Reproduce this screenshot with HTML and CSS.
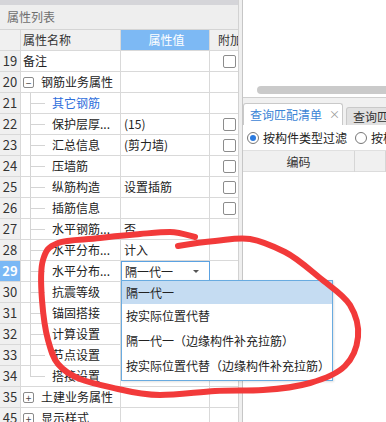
FILE: index.html
```html
<!DOCTYPE html>
<html>
<head>
<meta charset="utf-8">
<link rel="stylesheet" href="styles.css">
</head>
<body>
<div class="app">
  <section class="left">
    <div class="topbar"></div>
    <div class="title">属性列表</div>
    <div class="grid">
      <div class="row head"><div class="num"></div><div class="name c">属性名称</div><div class="val c hl">属性值</div><div class="ext">附加</div></div>
      <div class="row"><div class="num">19</div><div class="name">备注</div><div class="val"></div><div class="ext"><span class="cb"></span></div></div>
      <div class="row"><div class="num">20</div><div class="name"><span class="tog">−</span><span class="grp">钢筋业务属性</span></div><div class="val"></div><div class="ext"></div></div>
      <div class="row"><div class="num">21</div><div class="name"><span class="tree"></span><span class="link">其它钢筋</span></div><div class="val"></div><div class="ext"></div></div>
      <div class="row"><div class="num">22</div><div class="name"><span class="tree"></span>保护层厚...</div><div class="val">(15)</div><div class="ext"><span class="cb"></span></div></div>
      <div class="row"><div class="num">23</div><div class="name"><span class="tree"></span>汇总信息</div><div class="val">(剪力墙)</div><div class="ext"><span class="cb"></span></div></div>
      <div class="row"><div class="num">24</div><div class="name"><span class="tree"></span>压墙筋</div><div class="val"></div><div class="ext"><span class="cb"></span></div></div>
      <div class="row"><div class="num">25</div><div class="name"><span class="tree"></span>纵筋构造</div><div class="val">设置插筋</div><div class="ext"><span class="cb"></span></div></div>
      <div class="row"><div class="num">26</div><div class="name"><span class="tree"></span>插筋信息</div><div class="val"></div><div class="ext"><span class="cb"></span></div></div>
      <div class="row"><div class="num">27</div><div class="name"><span class="tree"></span>水平钢筋...</div><div class="val">否</div><div class="ext"></div></div>
      <div class="row"><div class="num">28</div><div class="name"><span class="tree"></span>水平分布...</div><div class="val">计入</div><div class="ext"></div></div>
      <div class="row"><div class="num hl">29</div><div class="name"><span class="tree"></span>水平分布...</div><div class="val edit"><span>隔一代一</span><span class="caret"></span></div><div class="ext"></div></div>
      <div class="row"><div class="num">30</div><div class="name"><span class="tree"></span>抗震等级</div><div class="val"></div><div class="ext"></div></div>
      <div class="row"><div class="num">31</div><div class="name"><span class="tree"></span>锚固搭接</div><div class="val"></div><div class="ext"></div></div>
      <div class="row"><div class="num">32</div><div class="name"><span class="tree"></span>计算设置</div><div class="val"></div><div class="ext"></div></div>
      <div class="row"><div class="num">33</div><div class="name"><span class="tree"></span>节点设置</div><div class="val"></div><div class="ext"></div></div>
      <div class="row"><div class="num">34</div><div class="name"><span class="tree last"></span>搭接设置</div><div class="val"></div><div class="ext"></div></div>
      <div class="row"><div class="num">35</div><div class="name"><span class="tog">+</span><span class="grp">土建业务属性</span></div><div class="val"></div><div class="ext"></div></div>
      <div class="row"><div class="num">45</div><div class="name"><span class="tog">+</span><span class="grp">显示样式</span></div><div class="val"></div><div class="ext"></div></div>
    </div>
  </section>
  <div class="splitter"></div>
  <section class="right">
    <div class="preview"><div class="hscroll"></div></div>
    <div class="tabs">
      <div class="tab active"><span>查询匹配清单</span><span class="x">×</span></div>
      <div class="tab">查询匹配清单</div>
    </div>
    <div class="filter">
      <span class="radio on"></span><span class="rlabel">按构件类型过滤</span>
      <span class="radio"></span><span class="rlabel">按构件过滤</span>
    </div>
    <div class="colhead"><div class="ch">编码</div><div class="ch"></div></div>
    <div class="listbody"></div>
  </section>
</div>

<div class="dropdown">
  <div class="opt on">隔一代一</div>
  <div class="opt">按实际位置代替</div>
  <div class="opt">隔一代一（边缘构件补充拉筋）</div>
  <div class="opt">按实际位置代替（边缘构件补充拉筋）</div>
</div>

<svg class="scribble" width="386" height="422" viewBox="0 0 386 422">
  <path d="M178,246 C184,245 203,242 215,241 S238,237 250,239 S273,246 285,252 S309,269 320,278 S344,295 350,305 S359,327 358,337 S353,358 345,366 S324,379 310,383 S279,389 263,390 S232,390 215,391 S176,395 160,395 S131,392 118,389 S90,383 80,379 S63,370 58,364 S51,351 48,340 S43,313 42,300 S40,270 43,260 S48,247 58,243 S86,240 100,238 S128,235 140,234 S161,232 170,232 S191,236 195,237" fill="none" stroke="#f23a3a" stroke-width="6" stroke-linecap="round" stroke-linejoin="round"/>
</svg>
</body>
</html>
```

FILE: styles.css
```css
* { box-sizing: border-box; }

body {
  margin: 0;
  width: 386px;
  height: 422px;
  overflow: hidden;
  position: relative;
  background: #f0f0f0;
  font-family: "Noto Sans CJK SC", "Microsoft YaHei", sans-serif;
  font-size: 12px;
  color: #222;
}

.app {
  display: flex;
  height: 422px;
}

/* ---------- left: property list ---------- */
.left {
  width: 238px;
  flex: none;
  display: flex;
  flex-direction: column;
  overflow: hidden;
  background: #fff;
}

.topbar {
  flex: none;
  height: 5px;
  background: #d5d5d9;
}

.title {
  flex: none;
  height: 25px;
  line-height: 23px;
  padding-left: 7px;
  color: #6e6e6e;
  font-size: 12px;
  background: #eeeeee;
  border-bottom: 1px solid #d4d4d4;
}

.grid {
  flex: none;
}

.row {
  display: grid;
  grid-template-columns: 21px 100px 89px 40px;
  height: 21px;
  width: 250px;
}

.row > div {
  border-right: 1px solid #d9d9d9;
  border-bottom: 1px solid #d9d9d9;
  line-height: 20px;
  white-space: nowrap;
  overflow: hidden;
}

.num {
  background: #f0f0f0;
  text-align: center;
  font-size: 13px;
  color: #333;
}

.num.hl {
  background: #7ab8f5;
  color: #fff;
  font-weight: bold;
}

.head > div {
  background: #f0f0f0;
  color: #333;
}

.head .c { text-align: center; }

.head .val.hl {
  background: #7db9f4;
  color: #fff;
}

.head .ext {
  padding-left: 8px;
}

.name {
  display: flex;
  align-items: center;
  padding-left: 2px;
}

.tree {
  align-self: stretch;
  width: 21px;
  margin-left: 7px;
  margin-right: 1px;
  flex: none;
  background:
    linear-gradient(#d4d4d4, #d4d4d4) left top / 1px 100% no-repeat,
    linear-gradient(#d4d4d4, #d4d4d4) left 10px / 15px 1px no-repeat;
}

.tree.last {
  background:
    linear-gradient(#d4d4d4, #d4d4d4) left top / 1px 11px no-repeat,
    linear-gradient(#d4d4d4, #d4d4d4) left 10px / 15px 1px no-repeat;
}

.tog {
  width: 11px;
  height: 11px;
  flex: none;
  border: 1px solid #8a8a8a;
  border-radius: 2px;
  display: flex;
  align-items: center;
  justify-content: center;
  font-size: 10px;
  line-height: 9px;
  color: #444;
  margin-right: 7px;
  background: #fff;
}

.link { color: #2f6fdc; }

.val {
  padding-left: 3px;
}

.val.edit {
  border: 1px solid #5ba2e2 !important;
  padding-left: 3px;
  padding-right: 10px;
  display: flex;
  align-items: center;
  justify-content: space-between;
  line-height: 18px;
}

.caret {
  width: 0;
  height: 0;
  border-left: 3px solid transparent;
  border-right: 3px solid transparent;
  border-top: 3px solid #555;
}

.ext {
  display: flex;
  align-items: center;
  padding-left: 13px;
}

.cb {
  width: 13px;
  height: 13px;
  border: 1px solid #8c8c8c;
  border-radius: 2px;
  background: #fff;
}

/* ---------- splitter ---------- */
.splitter {
  width: 4px;
  flex: none;
  background: #efefef;
  border-left: 1px solid #d2d2d2;
}

/* ---------- right panel ---------- */
.right {
  flex: 1;
  display: flex;
  flex-direction: column;
  border-left: 1px solid #c6c6c6;
  background: #f0f0f0;
  min-width: 0;
  overflow: hidden;
}

.preview {
  flex: none;
  height: 98px;
  background: #fff;
  border-bottom: 1px solid #cfcfcf;
  display: flex;
  flex-direction: column;
  justify-content: flex-end;
  padding: 0 0 3px 14px;
}

.hscroll {
  height: 8px;
  background: #cacaca;
  border-radius: 4px 0 0 4px;
}

.tabs {
  flex: none;
  display: flex;
  align-items: flex-end;
  height: 27px;
  padding-top: 5px;
}

.tab {
  flex: none;
  height: 18px;
  line-height: 17px;
  padding: 0 6px;
  margin-left: 3px;
  background: #e1e1e1;
  border: 1px solid #c9c9c9;
  border-bottom: none;
  border-radius: 3px 3px 0 0;
  white-space: nowrap;
  color: #333;
}

.tab.active {
  height: 22px;
  line-height: 21px;
  margin-left: 0;
  width: 100px;
  background: #fff;
  color: #3c85d6;
  display: flex;
  gap: 7px;
}

.tab .x {
  color: #9a9a9a;
  font-size: 11px;
}

.filter {
  flex: none;
  height: 25px;
  background: #fff;
  display: flex;
  align-items: center;
  padding-left: 4px;
  white-space: nowrap;
  overflow: hidden;
}

.radio {
  width: 12px;
  height: 12px;
  flex: none;
  border: 1px solid #777;
  border-radius: 50%;
  background: #fff;
  display: flex;
  align-items: center;
  justify-content: center;
}

.radio.on::after {
  content: "";
  width: 6px;
  height: 6px;
  border-radius: 50%;
  background: #2b7be0;
}

.rlabel {
  margin-left: 4px;
  margin-right: 8px;
}

.colhead {
  flex: none;
  height: 22px;
  display: grid;
  grid-template-columns: 112px 1fr;
  background: #f0f0f0;
  border-top: 1px solid #e0e0e0;
  border-bottom: 1px solid #dcdcdc;
}

.ch {
  text-align: center;
  line-height: 21px;
  color: #333;
  border-right: 1px solid #d6d6d6;
}

.listbody {
  flex: 1;
  background: #fff;
}

/* ---------- dropdown (overlay) ---------- */
.dropdown {
  position: absolute;
  left: 121px;
  top: 280px;
  width: 212px;
  height: 101px;
  background: #fff;
  border: 1px solid #69abe0;
  box-shadow: 1px 1px 2px rgba(0,0,0,0.12);
}

.opt {
  height: 24.75px;
  line-height: 24px;
  padding-left: 4px;
  white-space: nowrap;
  color: #222;
}

.opt.on {
  height: 23px;
  line-height: 23px;
  background: #c5dcf2;
}

/* ---------- hand-drawn annotation (overlay) ---------- */
.scribble {
  position: absolute;
  left: 0;
  top: 0;
  pointer-events: none;
}
```
